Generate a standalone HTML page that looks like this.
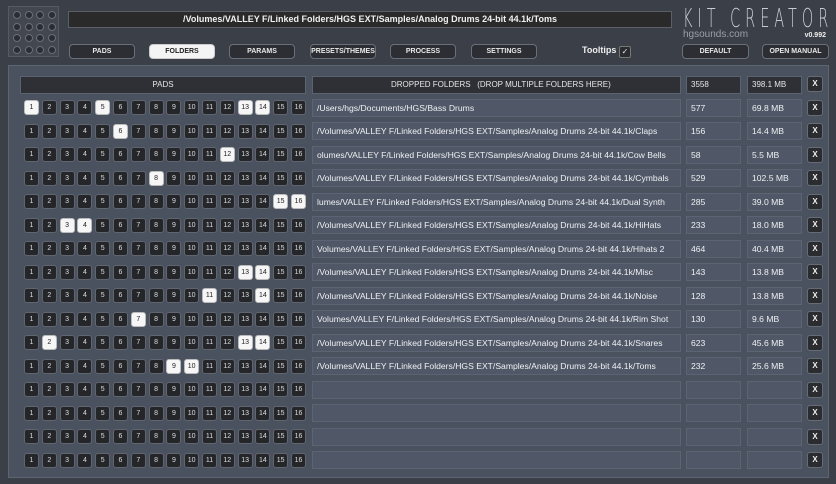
<!DOCTYPE html>
<html><head><meta charset="utf-8"><style>
*{box-sizing:border-box;margin:0;padding:0}
body{width:836px;height:484px;background:#3b3f47;font-family:"Liberation Sans",sans-serif;position:relative;overflow:hidden;color:#e6e8ec}
.a{position:absolute}
.logo{left:8px;top:6px;width:51px;height:51px;background:#424750;border:1px solid #555b65}
.dot{position:absolute;width:8px;height:8px;border-radius:50%;background:#2a2d33;border:1.5px solid #6a707a}
.bar{left:68px;top:11px;width:604px;height:17px;background:#2b2a2a;border:1px solid #5a5f68;font-size:9px;font-weight:bold;text-align:center;line-height:15px;color:#f0f0f0}
.btn{position:absolute;top:44px;height:15px;background:#2c2e33;border:1px solid #6a7079;border-radius:4px;font-size:7px;font-weight:bold;text-align:center;line-height:13px;color:#e8e8e8;white-space:nowrap}
.btn.on{background:#f4f4f4;color:#222;border-color:#ccc}
.kit{left:683px;top:6px;font-size:26px;letter-spacing:9px;color:#c8ccd2;white-space:nowrap;transform:scaleX(0.555);transform-origin:left;font-family:"DejaVu Sans",sans-serif;font-weight:200;line-height:26px}
.panel{left:8px;top:65px;width:821px;height:413px;background:#4a5260;border:1px solid #5d6572}
.hd{position:absolute;height:18px;background:#2e3035;border:1px solid #5b6270;font-size:8px;line-height:16px;color:#e6e6e6;white-space:nowrap}
.cell{position:absolute;height:18px;background:#505867;border:1px solid #5c6474;font-size:8.6px;line-height:16px;padding-left:4px;color:#eef0f3;white-space:nowrap;overflow:hidden}
.pad{position:absolute;width:15px;height:15px;background:#24262a;border:1px solid #60656e;border-radius:3px;font-size:7px;text-align:center;line-height:13px;color:#ddd}
.pad.w{background:#f6f6f6;color:#222;border-color:#bbb}
.x{position:absolute;width:16px;height:16px;background:#2a2c30;border:1px solid #666c75;border-radius:3px;font-size:8px;font-weight:bold;text-align:center;line-height:14px;color:#eee}
</style></head><body>
<div class="a logo" id="logo"></div>
<div class="a bar">/Volumes/VALLEY F/Linked Folders/HGS EXT/Samples/Analog Drums 24-bit 44.1k/Toms</div>
<div class="btn" style="left:69px;width:66px">PADS</div>
<div class="btn on" style="left:149px;width:66px">FOLDERS</div>
<div class="btn" style="left:229px;width:66px">PARAMS</div>
<div class="btn" style="left:310px;width:66px">PRESETS/THEMES</div>
<div class="btn" style="left:390px;width:66px">PROCESS</div>
<div class="btn" style="left:471px;width:66px">SETTINGS</div>
<div class="a" style="left:582px;top:45px;font-size:9px;font-weight:bold;color:#eee">Tooltips</div>
<div class="a" style="left:619px;top:46px;width:12px;height:12px;background:#2a2c30;border:1px solid #777;border-radius:2px;font-size:8px;text-align:center;line-height:10px">✓</div>
<div class="btn" style="left:682px;width:67px">DEFAULT</div>
<div class="btn" style="left:762px;width:67px">OPEN MANUAL</div>
<div class="a kit">KIT CREATOR</div>
<div class="a" style="left:683px;top:29px;font-size:10px;color:#9aa0a8">hgsounds.com</div>
<div class="a" style="left:790px;top:32px;width:36px;text-align:right;font-size:7px;font-weight:bold;color:#eee">v0.992</div>
<div class="a panel"></div>
<div class="hd" style="left:20px;top:76px;width:286px;text-align:center">PADS</div>
<div class="hd" style="left:312px;top:76px;width:369px;padding-left:78px">DROPPED FOLDERS &nbsp;&nbsp;(DROP MULTIPLE FOLDERS HERE)</div>
<div class="hd" style="left:686px;top:76px;width:55px;padding-left:4px">3558</div>
<div class="hd" style="left:747px;top:76px;width:55px;padding-left:4px">398.1 MB</div>
<div class="x" style="left:807px;top:76px">X</div>
<div id="rows"></div>
<script>
var L=document.getElementById('logo'),h='';
for(var i=0;i<4;i++)for(var j=0;j<4;j++)h+='<div class="dot" style="left:'+(4+j*11.5)+'px;top:'+(4+i*11.5)+'px"></div>';
L.innerHTML=h;
var d=[["/Users/hgs/Documents/HGS/Bass Drums","577","69.8 MB",[1,5,13,14]],
["/Volumes/VALLEY F/Linked Folders/HGS EXT/Samples/Analog Drums 24-bit 44.1k/Claps","156","14.4 MB",[6]],
["olumes/VALLEY F/Linked Folders/HGS EXT/Samples/Analog Drums 24-bit 44.1k/Cow Bells","58","5.5 MB",[12]],
["/Volumes/VALLEY F/Linked Folders/HGS EXT/Samples/Analog Drums 24-bit 44.1k/Cymbals","529","102.5 MB",[8]],
["lumes/VALLEY F/Linked Folders/HGS EXT/Samples/Analog Drums 24-bit 44.1k/Dual Synth","285","39.0 MB",[15,16]],
["/Volumes/VALLEY F/Linked Folders/HGS EXT/Samples/Analog Drums 24-bit 44.1k/HiHats","233","18.0 MB",[3,4]],
["Volumes/VALLEY F/Linked Folders/HGS EXT/Samples/Analog Drums 24-bit 44.1k/Hihats 2","464","40.4 MB",[]],
["/Volumes/VALLEY F/Linked Folders/HGS EXT/Samples/Analog Drums 24-bit 44.1k/Misc","143","13.8 MB",[13,14]],
["/Volumes/VALLEY F/Linked Folders/HGS EXT/Samples/Analog Drums 24-bit 44.1k/Noise","128","13.8 MB",[11,14]],
["Volumes/VALLEY F/Linked Folders/HGS EXT/Samples/Analog Drums 24-bit 44.1k/Rim Shot","130","9.6 MB",[7]],
["/Volumes/VALLEY F/Linked Folders/HGS EXT/Samples/Analog Drums 24-bit 44.1k/Snares","623","45.6 MB",[2,13,14]],
["/Volumes/VALLEY F/Linked Folders/HGS EXT/Samples/Analog Drums 24-bit 44.1k/Toms","232","25.6 MB",[9,10]],
["","","",[]],["","","",[]],["","","",[]],["","","",[]]];
var s='';
for(var r=0;r<16;r++){var y=100+r*23.5;
for(var p=1;p<=16;p++){var w=d[r][3].indexOf(p)>=0?' w':'';s+='<div class="pad'+w+'" style="left:'+(24+(p-1)*17.8)+'px;top:'+y+'px">'+p+'</div>';}
s+='<div class="cell" style="left:312px;top:'+(y-1.5)+'px;width:369px">'+d[r][0]+'</div>';
s+='<div class="cell" style="left:686px;top:'+(y-1.5)+'px;width:55px">'+d[r][1]+'</div>';
s+='<div class="cell" style="left:747px;top:'+(y-1.5)+'px;width:55px">'+d[r][2]+'</div>';
s+='<div class="x" style="left:807px;top:'+(y-0.5)+'px">X</div>';}
document.getElementById('rows').innerHTML=s;
</script>
</body></html>
